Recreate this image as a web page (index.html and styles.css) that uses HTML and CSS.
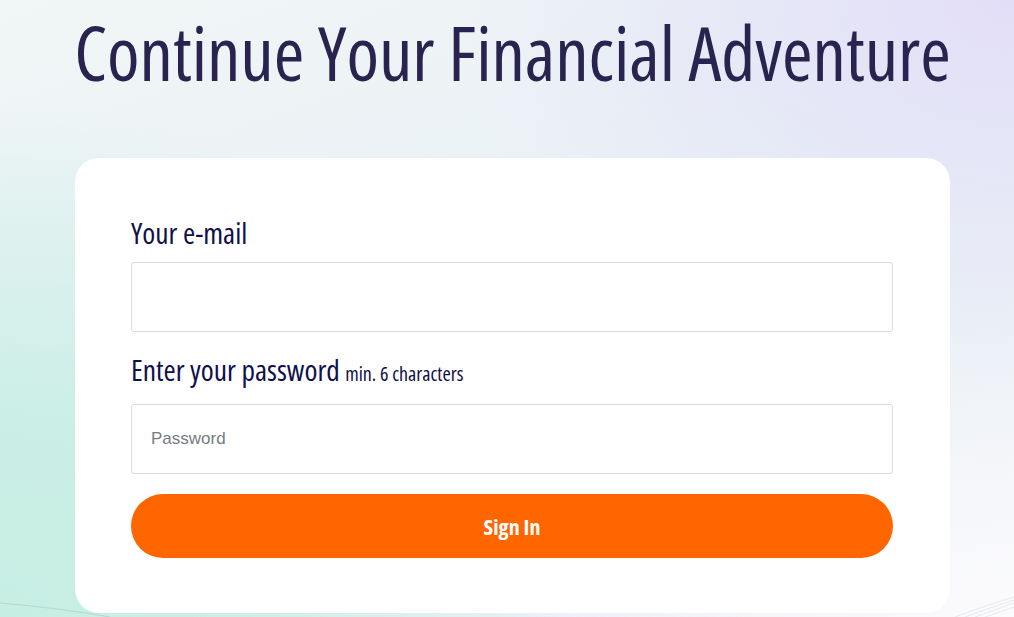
FILE: index.html
```html
<!DOCTYPE html>
<html lang="en">
<head>
<meta charset="utf-8">
<title>Sign In</title>
<link rel="stylesheet" href="styles.css">
</head>
<body>
<svg class="deco" width="1014" height="617" viewBox="0 0 1014 617" aria-hidden="true">
  <path d="M0 603 Q 60 608 110 617" fill="none" stroke="#b5d6d4" stroke-width="1"/>
  <path d="M955 617 Q 990 604 1014 597" fill="none" stroke="#e6e9ee" stroke-width="1"/>
  <path d="M965 617 Q 995 606 1014 600" fill="none" stroke="#e6e9ee" stroke-width="1"/>
  <path d="M975 617 Q 1000 608 1014 603" fill="none" stroke="#e6e9ee" stroke-width="1"/>
  <path d="M985 617 Q 1003 611 1014 607" fill="none" stroke="#e6e9ee" stroke-width="1"/>
</svg>
<main class="page">
  <h1 class="title">Continue Your Financial Adventure</h1>
  <form class="card">
    <label class="label label-mail" for="email">Your e-mail</label>
    <input class="field" id="email" type="email">
    <label class="label label-pw" for="pw">Enter your password <span class="hint">min. 6 characters</span></label>
    <input class="field" id="pw" type="password" placeholder="Password">
    <button class="btn" type="button">Sign In</button>
  </form>
</main>
</body>
</html>
```

FILE: styles.css
```css
* { box-sizing: border-box; }
html, body { margin: 0; height: 100%; }
body {
  position: relative;
  background:
    radial-gradient(ellipse 560px 380px at 100% 0%, rgba(226,222,248,1) 0%, rgba(226,222,248,0) 100%),
    radial-gradient(ellipse 560px 520px at 0% 100%, #c6eee3 0%, rgba(198,238,227,0.85) 40%, rgba(198,238,227,0) 100%),
    radial-gradient(ellipse 500px 300px at 100% 100%, #fbfbfd 0%, rgba(251,251,253,0) 100%),
    linear-gradient(160deg, #f1f6f6 0%, #e9f1f5 45%, #eef0f7 100%);
  overflow: hidden;
}
.deco {
  position: absolute;
  left: 0;
  top: 0;
  pointer-events: none;
}
.page {
  position: relative;
  width: 875px;
  margin-left: 75px;
  display: flex;
  flex-direction: column;
  align-items: center;
}
.title {
  margin: 8px 0 0;
  font-family: "Open Sans", sans-serif;
  font-stretch: 75%;
  font-weight: 400;
  font-size: 74px;
  line-height: 90px;
  color: #29244f;
  white-space: nowrap;
}
.card {
  margin-top: 60px;
  width: 875px;
  background: #fff;
  border-radius: 24px;
  padding: 57px 57px 55px 56px;
  display: flex;
  flex-direction: column;
}
.label {
  font-family: "Open Sans", sans-serif;
  font-stretch: 75%;
  font-size: 29.5px;
  line-height: 36px;
  color: #10104a;
}
.label-mail { margin-bottom: 11px; }
.label-pw { margin-top: 20px; margin-bottom: 12px; }
.hint { font-size: 20px; }
.field {
  height: 70px;
  width: 100%;
  border: 1px solid #dcdcdc;
  border-radius: 3px;
  padding: 0 19px;
  font-family: "Liberation Sans", Arial, sans-serif;
  font-size: 17px;
  color: #333;
  background: #fff;
}
.field::placeholder { color: #757b82; }
.btn {
  margin-top: 20px;
  height: 64px;
  width: 100%;
  border: 0;
  border-radius: 32px;
  background: #ff6600;
  color: #fff;
  font-family: "Open Sans", sans-serif;
  font-stretch: 75%;
  font-weight: 700;
  font-size: 22px;
}
```
